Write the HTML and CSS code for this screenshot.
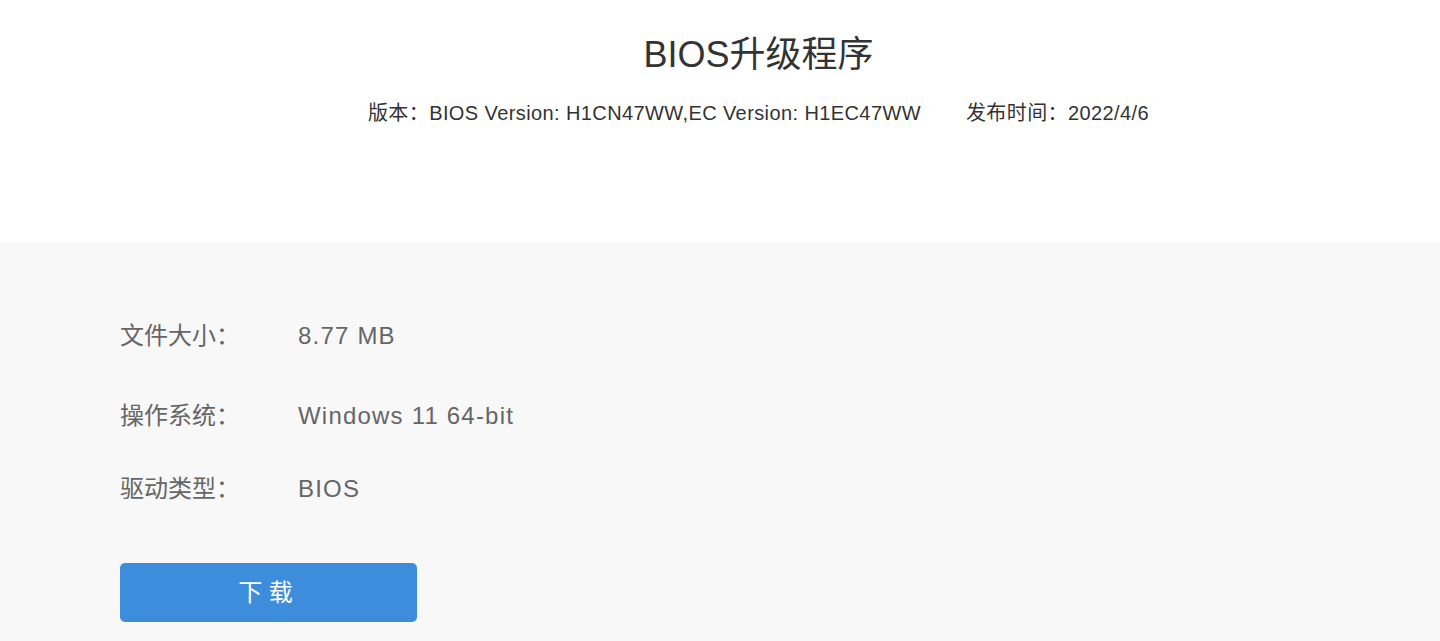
FILE: index.html
```html
<!DOCTYPE html>
<html lang="zh-CN">
<head>
  <meta charset="utf-8" />
  <title>BIOS升级程序</title>
  <link rel="stylesheet" href="styles.css">
</head>
<body>
  <header class="head">
    <h1 class="title">BIOS升级程序</h1>
    <div class="meta">
      <span>版本：BIOS Version: H1CN47WW,EC Version: H1EC47WW</span>
      <span>发布时间：2022/4/6</span>
    </div>
  </header>

  <section class="info">
    <div class="row row-size"><span class="label">文件大小：</span><span class="value">8.77 MB</span></div>
    <div class="row row-os"><span class="label">操作系统：</span><span class="value">Windows 11 64-bit</span></div>
    <div class="row"><span class="label">驱动类型：</span><span class="value">BIOS</span></div>
    <button class="download">下 载</button>
  </section>
</body>
</html>
```

FILE: styles.css
```css
* {
  margin: 0;
  padding: 0;
  box-sizing: border-box;
}

body {
  font-family: "Liberation Sans", "Noto Sans CJK SC", sans-serif;
  background-color: #fff;
  color: #333;
  overflow: hidden;
}

.head {
  height: 242px;
  padding: 30px 0 0 77px;
  text-align: center;
}

.title {
  font-size: 36px;
  font-weight: normal;
  line-height: 50px;
  color: #333;
}

.meta {
  margin-top: 18px;
  display: flex;
  justify-content: center;
  gap: 45px;
  font-size: 20px;
  line-height: 30px;
  letter-spacing: 0.4px;
  color: #333;
}

.info {
  background-color: #f8f8f8;
  height: 399px;
  padding: 74px 0 0 120px;
}

.row {
  display: flex;
  font-size: 24px;
  line-height: 40px;
  color: #666;
}

.row-size {
  margin-bottom: 40px;
}

.row-os {
  margin-bottom: 33px;
}

.label {
  width: 178px;
}

.value {
  letter-spacing: 1.2px;
}

.download {
  margin-top: 54px;
  width: 297px;
  height: 59px;
  padding: 0 6px 5px 0;
  border: none;
  border-radius: 5px;
  background-color: #3d8ddd;
  color: #fff;
  font-family: "Liberation Sans", "Noto Sans CJK SC", sans-serif;
  font-size: 24px;
  cursor: pointer;
}
```
